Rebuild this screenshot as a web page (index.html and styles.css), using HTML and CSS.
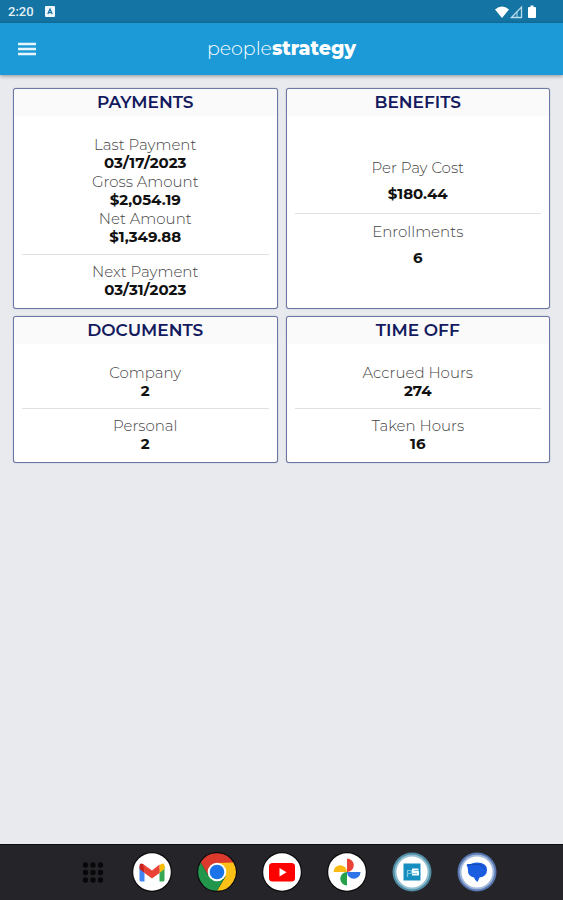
FILE: index.html
```html
<!DOCTYPE html>
<html lang="en">
<head>
<meta charset="utf-8">
<meta name="viewport" content="width=device-width, initial-scale=1">
<title>peoplestrategy</title>
<link rel="stylesheet" href="styles.css">
</head>
<body>
<div class="status">
  <span class="clock">2:20</span>
  <svg class="notice" width="10" height="11" viewBox="0 0 10 11"><rect width="10" height="11" rx="1" fill="#eef7fb"/><path d="M2.8 8 5 3l2.2 5M3.6 6.6h2.8" fill="none" stroke="#1474a5" stroke-width="1.3"/></svg>
  <svg class="signals" width="42" height="14" viewBox="0 0 42 14"><path d="M0 4.6Q7 -1.6 14 4.6L7 13z" fill="#fff"/><path d="M16.500 12.500 26.500 2v10.500z" fill="none" stroke="#b9dcec" stroke-width="1.300"/><path d="M22 12.500V7" stroke="#b9dcec"/><path d="M34 2h1.500V.5h3V2H40q1 0 1 1v9q0 1-1 1h-6q-1 0-1-1V3q0-1 1-1z" fill="#fff"/></svg>
</div>
<header class="appbar">
  <button class="menu" type="button" aria-label="Menu"><svg width="18" height="14" viewBox="0 0 18 14"><path d="M0 2h18M0 7h18M0 12h18" stroke="#e6f5fc" stroke-width="2.400"/></svg></button>
  <a class="brand" href="#">people<b>strategy</b></a>
</header>
<main class="cards">
  <section class="card">
    <h2>PAYMENTS</h2>
    <div class="body">
      <dl><dt>Last Payment</dt><dd>03/17/2023</dd><dt>Gross Amount</dt><dd>$2,054.19</dd><dt>Net Amount</dt><dd>$1,349.88</dd></dl>
      <hr>
      <dl><dt>Next Payment</dt><dd>03/31/2023</dd></dl>
    </div>
  </section>
  <section class="card">
    <h2>BENEFITS</h2>
    <div class="body roomy">
      <dl><dt>Per Pay Cost</dt><dd>$180.44</dd></dl>
      <hr>
      <dl><dt>Enrollments</dt><dd>6</dd></dl>
    </div>
  </section>
  <section class="card">
    <h2>DOCUMENTS</h2>
    <div class="body">
      <dl><dt>Company</dt><dd>2</dd></dl>
      <hr>
      <dl><dt>Personal</dt><dd>2</dd></dl>
    </div>
  </section>
  <section class="card">
    <h2>TIME OFF</h2>
    <div class="body">
      <dl><dt>Accrued Hours</dt><dd>274</dd></dl>
      <hr>
      <dl><dt>Taken Hours</dt><dd>16</dd></dl>
    </div>
  </section>
</main>
<nav class="dock" aria-label="Apps">
  <button type="button" aria-label="All apps"><svg viewBox="0 0 40 40"><g fill="#08080a"><circle cx="18.500" cy="13" r="2.700"/><circle cx="26" cy="13" r="2.700"/><circle cx="33.500" cy="13" r="2.700"/><circle cx="18.500" cy="20.500" r="2.700"/><circle cx="26" cy="20.500" r="2.700"/><circle cx="33.500" cy="20.500" r="2.700"/><circle cx="18.500" cy="28" r="2.700"/><circle cx="26" cy="28" r="2.700"/><circle cx="33.500" cy="28" r="2.700"/></g></svg></button>
  <button type="button" aria-label="Gmail"><svg viewBox="0 0 40 40"><circle cx="20" cy="20" r="20" fill="#0c0c0e"/><circle cx="20" cy="20" r="18.800" fill="#fff"/><path d="M7.500 14v14q0 1.500 1.500 1.500h3.500V17z" fill="#4285f4"/><path d="M32.500 14v14q0 1.500-1.500 1.500h-3.500V17z" fill="#34a853"/><path d="M27.500 13.500 29 12q3.500-1.500 3.500 2v3l-5 4z" fill="#fbbc04"/><path d="M12.500 13.500 11 12q-3.500-1.500-3.500 2v3l5 4z" fill="#c5221f"/><path d="M11 12 20 18.500l7.500-6v8.500L20 26.500 12.500 21z" fill="#ea4335"/></svg></button>
  <button type="button" aria-label="Chrome"><svg viewBox="0 0 40 40"><circle cx="20" cy="20" r="20" fill="#0c0c0e"/><path d="M3.700 10.600A18.800 18.800 0 0 1 36.800 11.500H20L12 24.500z" fill="#dc3a2d"/><path d="M36.300 10.600A18.800 18.800 0 0 1 20 38.800L28.500 24.500 20 11z" fill="#fbc116"/><path d="M3.700 10.600A18.800 18.800 0 0 0 20 38.800L28 25 12 24.500z" fill="#22964a"/><circle cx="20" cy="20" r="9.300" fill="#fff"/><circle cx="20" cy="20" r="7.300" fill="#1a73e8"/></svg></button>
  <button type="button" aria-label="YouTube"><svg viewBox="0 0 40 40"><circle cx="20" cy="20" r="20" fill="#0c0c0e"/><circle cx="20" cy="20" r="18.800" fill="#fff"/><rect x="7" y="11" width="26" height="18.500" rx="3.500" fill="#f00"/><path d="m17.500 16 7 4.200-7 4.300z" fill="#fff"/></svg></button>
  <button type="button" aria-label="Photos"><svg viewBox="0 0 40 40"><circle cx="20" cy="20" r="20" fill="#0c0c0e"/><circle cx="20" cy="20" r="18.800" fill="#fff"/><path d="M20 20V6.500a6.700 6.700 0 0 1 0 13.500z" fill="#ea4335"/><path d="M20 20h13.500a6.700 6.700 0 0 1-13.500 0z" fill="#2f75e8"/><path d="M20 20v13.500a6.700 6.700 0 0 1 0-13.500z" fill="#27a04b"/><path d="M20 20H6.500a6.700 6.700 0 0 1 13.500 0z" fill="#fbb913"/></svg></button>
  <button type="button" aria-label="peoplestrategy"><svg viewBox="0 0 40 40"><circle cx="20" cy="20" r="19.500" fill="#4e8ba5"/><circle cx="20" cy="20" r="17.500" fill="#91bfd0"/><circle cx="20" cy="20" r="15.500" fill="#fff"/><rect x="11.500" y="11.500" width="17" height="17" fill="#168fc0"/><path d="M15.500 25v-6.500h4v3H16" fill="none" stroke="#7cc6e2" stroke-width="1.200"/><path d="M26.500 17.500H21v2.500h5v2.500h-6" fill="none" stroke="#f4fbfe" stroke-width="2"/></svg></button>
  <button type="button" aria-label="Messages"><svg viewBox="0 0 40 40"><circle cx="20" cy="20" r="19.500" fill="#5778b0"/><circle cx="20" cy="20" r="17.500" fill="#a3b8da"/><circle cx="20" cy="20" r="15.500" fill="#fff"/><path d="M9.500 13q1-1.500 4-1 2.500-1.500 6.500-1.500 10 0 10 7.500 0 6.500-7.500 7.500L20.500 30q-2.500-1.500-3.500-4.500-6.500-1.500-6-7.500 0-3-1.500-5z" fill="#1b5de0"/><path d="M10 13q1.500-.5 4-.5h6q6.500.5 8 5" fill="none" stroke="#1549b5"/></svg></button>
</nav>
</body>
</html>
```
FILE: styles.css
```css
* { box-sizing: border-box; }

body {
  margin: 0;
  min-height: 100vh;
  display: flex;
  flex-direction: column;
  background: #e9eaee;
  color: #111;
  font-family: Montserrat, Inter, "Liberation Sans", sans-serif;
}

button {
  padding: 0;
  border: 0;
  background: none;
  cursor: pointer;
}

svg { display: block; }

.status {
  display: flex;
  align-items: center;
  height: 23px;
  padding: 0 26px 0 8px;
  background: #1474a3;
}

.clock {
  color: #e3f1f7;
  font: 500 13px/22px Roboto, sans-serif;
}

.notice { margin-left: 11px; }
.signals { margin-left: auto; }

.appbar {
  display: grid;
  grid-template-columns: 1fr auto 1fr;
  align-items: center;
  height: 52px;
  padding: 0 18px;
  background: #1b9ad7;
  box-shadow: 0 1px 4px rgba(0, 0, 0, 0.4);
}

.menu { justify-self: start; }

.brand {
  color: #fff;
  font-size: 19px;
  font-weight: 300;
  line-height: 24px;
  text-decoration: none;
}

.brand b { font-weight: 800; }

.cards {
  flex: 1;
  display: grid;
  grid-template-columns: 1fr 1fr;
  align-content: start;
  gap: 7px 8px;
  padding: 13px;
}

.card {
  display: flex;
  flex-direction: column;
  border: 1px solid #6c76a2;
  border-radius: 3px;
  background: #fff;
  box-shadow: 0 0 1px #6c76a2;
  text-align: center;
}

.card h2 {
  margin: 0;
  border-radius: 3px;
  background: #fafafb;
  color: #141a5e;
  font-size: 17px;
  font-weight: 600;
  line-height: 27px;
}

.body {
  flex: 1;
  display: flex;
  flex-direction: column;
  padding: 19px 8px 9px;
}

.body dl { margin: 0; }

.body dt {
  color: #444;
  font-size: 15px;
  font-weight: 300;
  line-height: 19px;
}

.body dd {
  margin: 0;
  font-size: 15px;
  font-weight: 700;
  line-height: 18px;
}

.body hr {
  width: 100%;
  margin: 8px 0 7px;
  border: 0;
  border-top: 1px solid #e0e1e3;
}

.roomy {
  justify-content: center;
  padding: 2px 8px 0;
}

.roomy dt,
.roomy dd { line-height: 26px; }

.roomy hr { margin: 6px 0 5px; }

.dock {
  display: flex;
  justify-content: center;
  gap: 25px;
  padding: 7px 0 8px;
  border-top: 1px solid #0d0d0f;
  background: #252529;
}

.dock svg {
  width: 40px;
  height: 40px;
}
```
